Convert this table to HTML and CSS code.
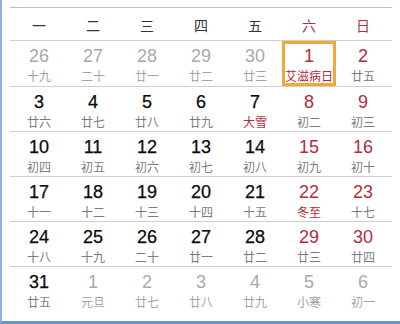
FILE: index.html
```html
<!DOCTYPE html>
<html lang="zh">
<head>
<meta charset="utf-8">
<link rel="stylesheet" href="styles.css">
</head>
<body>
<div class="frame">
  <div class="cal">
    <div class="row head">
      <div class="h">一</div><div class="h">二</div><div class="h">三</div><div class="h">四</div><div class="h">五</div><div class="h we">六</div><div class="h we">日</div>
    </div>
    <div class="row week first">
      <div class="cell off"><span class="n">26</span><span class="l">十九</span></div>
      <div class="cell off"><span class="n">27</span><span class="l">二十</span></div>
      <div class="cell off"><span class="n">28</span><span class="l">廿一</span></div>
      <div class="cell off"><span class="n">29</span><span class="l">廿二</span></div>
      <div class="cell off"><span class="n">30</span><span class="l">廿三</span></div>
      <div class="cell we sel"><span class="n">1</span><span class="l fest">艾滋病日</span></div>
      <div class="cell we"><span class="n">2</span><span class="l">廿五</span></div>
    </div>
    <div class="row week">
      <div class="cell"><span class="n">3</span><span class="l">廿六</span></div>
      <div class="cell"><span class="n">4</span><span class="l">廿七</span></div>
      <div class="cell"><span class="n">5</span><span class="l">廿八</span></div>
      <div class="cell"><span class="n">6</span><span class="l">廿九</span></div>
      <div class="cell"><span class="n">7</span><span class="l fest">大雪</span></div>
      <div class="cell we"><span class="n">8</span><span class="l">初二</span></div>
      <div class="cell we"><span class="n">9</span><span class="l">初三</span></div>
    </div>
    <div class="row week">
      <div class="cell"><span class="n">10</span><span class="l">初四</span></div>
      <div class="cell"><span class="n">11</span><span class="l">初五</span></div>
      <div class="cell"><span class="n">12</span><span class="l">初六</span></div>
      <div class="cell"><span class="n">13</span><span class="l">初七</span></div>
      <div class="cell"><span class="n">14</span><span class="l">初八</span></div>
      <div class="cell we"><span class="n">15</span><span class="l">初九</span></div>
      <div class="cell we"><span class="n">16</span><span class="l">初十</span></div>
    </div>
    <div class="row week">
      <div class="cell"><span class="n">17</span><span class="l">十一</span></div>
      <div class="cell"><span class="n">18</span><span class="l">十二</span></div>
      <div class="cell"><span class="n">19</span><span class="l">十三</span></div>
      <div class="cell"><span class="n">20</span><span class="l">十四</span></div>
      <div class="cell"><span class="n">21</span><span class="l">十五</span></div>
      <div class="cell we"><span class="n">22</span><span class="l fest">冬至</span></div>
      <div class="cell we"><span class="n">23</span><span class="l">十七</span></div>
    </div>
    <div class="row week">
      <div class="cell"><span class="n">24</span><span class="l">十八</span></div>
      <div class="cell"><span class="n">25</span><span class="l">十九</span></div>
      <div class="cell"><span class="n">26</span><span class="l">二十</span></div>
      <div class="cell"><span class="n">27</span><span class="l">廿一</span></div>
      <div class="cell"><span class="n">28</span><span class="l">廿二</span></div>
      <div class="cell we"><span class="n">29</span><span class="l">廿三</span></div>
      <div class="cell we"><span class="n">30</span><span class="l">廿四</span></div>
    </div>
    <div class="row week last">
      <div class="cell"><span class="n">31</span><span class="l">廿五</span></div>
      <div class="cell off"><span class="n">1</span><span class="l">元旦</span></div>
      <div class="cell off"><span class="n">2</span><span class="l">廿七</span></div>
      <div class="cell off"><span class="n">3</span><span class="l">廿八</span></div>
      <div class="cell off"><span class="n">4</span><span class="l">廿九</span></div>
      <div class="cell off"><span class="n">5</span><span class="l">小寒</span></div>
      <div class="cell off"><span class="n">6</span><span class="l">初一</span></div>
    </div>
  </div>
</div>
</body>
</html>
```

FILE: styles.css
```css
html, body {
  margin: 0;
  padding: 0;
  background: #fff;
}
body {
  width: 400px;
  height: 324px;
  overflow: hidden;
  font-family: "Liberation Sans", Arial, "Noto Sans CJK SC", sans-serif;
}
.frame {
  box-sizing: border-box;
  width: 400px;
  height: 324px;
  border-left: 2px solid #8db1d9;
  border-bottom: 3px solid #6596cf;
  padding-top: 7px;
  padding-left: 8px;
}
.cal {
  width: 382px;
  border-top: 1px solid #a9c6de;
}
.row {
  display: grid;
  grid-template-columns: repeat(7, 54px);
  padding: 0 2px;
  border-bottom: 1px solid #cfcfcf;
}
.row.last {
  border-bottom: none;
}
.head {
  height: 32px;
  align-items: center;
}
.h {
  text-align: center;
  font-family: "Noto Sans CJK SC", sans-serif;
  font-size: 14px;
  line-height: 16px;
  color: #333;
  padding-top: 1px;
}
.h.we {
  color: #a8323f;
}
.week {
  height: 44px;
}
.week.first {
  height: 45px;
}
.cell {
  display: flex;
  flex-direction: column;
  align-items: center;
  padding-top: 5px;
  box-sizing: border-box;
}
.n {
  font-size: 18px;
  line-height: 20px;
  color: #0a0a0a;
  -webkit-text-stroke: 0.25px #0a0a0a;
}
.l {
  font-family: "Noto Sans CJK SC", sans-serif;
  font-size: 12px;
  line-height: 16px;
  margin-top: 2px;
  color: #7c7c7c;
}
.cell.we .n {
  color: #b32c3d;
  -webkit-text-stroke: 0;
}
.l.fest {
  color: #b32c3d;
}
.cell.off .n {
  color: #a9a9a9;
  -webkit-text-stroke: 0;
}
.cell.off .l {
  color: #a3a3a3;
}
.cell.sel {
  box-shadow: inset 0 0 0 3px #efa936;
}
```
